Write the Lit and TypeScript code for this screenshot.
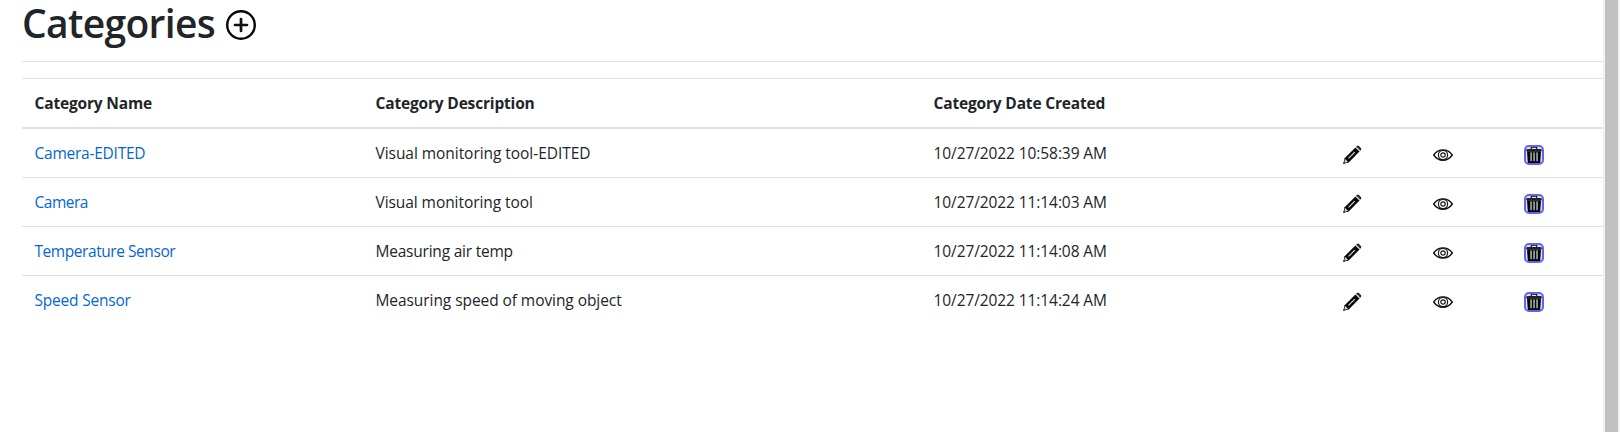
import { LitElement, html, css, svg } from "lit";
import { customElement } from "lit/decorators.js";

interface Category {
  name: string;
  description: string;
  created: string;
  nameTracking: number;
  descriptionTracking: number;
}

const categories: Category[] = [
  { name: "Camera-EDITED", description: "Visual monitoring tool-EDITED", created: "10/27/2022 10:58:39 AM", nameTracking: -0.24, descriptionTracking: -0.05 },
  { name: "Camera", description: "Visual monitoring tool", created: "10/27/2022 11:14:03 AM", nameTracking: -0.48, descriptionTracking: -0.07 },
  { name: "Temperature Sensor", description: "Measuring air temp", created: "10/27/2022 11:14:08 AM", nameTracking: -0.44, descriptionTracking: -0.22 },
  { name: "Speed Sensor", description: "Measuring speed of moving object", created: "10/27/2022 11:14:24 AM", nameTracking: -0.21, descriptionTracking: -0.07 },
];

const plusIcon = html`<svg class="plus" viewBox="0 0 30 30" width="30" height="30">
  <circle cx="15" cy="15" r="13.8" fill="none" stroke="#050505" stroke-width="2.4" />
  <path d="M15 9v12M9 15h12" stroke="#111" stroke-width="2.7" stroke-linecap="round" />
</svg>`;

const pencilIcon = html`<svg viewBox="0 0 20 20" width="20" height="20">
  <path d="M1.3 18.8L2.6 13.3L13.4 2.5L17.5 6.6L6.7 17.4Z" fill="#080808" />
  <path d="M2.2 17.9L3.2 14.1L5.9 16.8Z" fill="#d5d5d5" />
  <path d="M1.2 18.9L1.9 16.8L3.2 18.2Z" fill="#222" />
  <path d="M6.5 13.4L12.8 7.1" stroke="#ddd" stroke-width="1.1" />
  <path d="M14.1 1.8L15 1C15.7.5 16.3.5 16.9 1.1L18.8 3C19.4 3.6 19.4 4.3 18.9 5L18.1 5.8Z" fill="#181818" />
  <path d="M13.6 2.2L17.7 6.4" stroke="#aaa" stroke-width=".7" />
  <path d="M15.7 2.4L17.6 4.2" stroke="#888" stroke-width="1" />
</svg>`;

const eyeIcon = html`<svg viewBox="0 0 20 20" width="20" height="20">
  <path d="M.7 10C5.5 3.1 14.5 3.1 19.3 10C14.5 16.9 5.5 16.9.7 10Z" fill="none" stroke="#111" stroke-width="1.4" />
  <circle cx="10" cy="10" r="4.6" fill="none" stroke="#181818" stroke-width="1.2" />
  <circle cx="10" cy="10" r="2.2" fill="none" stroke="#181818" stroke-width="1.2" />
</svg>`;

const trashIcon = html`<svg viewBox="0 0 16 16" width="16" height="16">
  <path d="M5.2 2V.9Q5.2.3 5.9.3H10.1Q10.8.3 10.8.9V2" fill="none" stroke="#080808" stroke-width="1.1" />
  <path d="M0 4.2L.7 1.9H15.3L16 4.2Z" fill="#222" />
  <path d="M1 4.2H15L14.2 16H1.8Z" fill="#050505" />
  ${[4.4, 7.4, 10.4].map((x) => svg`<rect x=${x} y="5.4" width="1.3" height="8.8" fill="#c5d3d8" />`)}
</svg>`;

@customElement("app-root")
export class AppRoot extends LitElement {
  static styles = css`
    :host {
      display: flex;
      height: 432px;
      background: #fff;
      color: #212529;
      font: 15.5px/24px "Open Sans", "Noto Sans", sans-serif;
    }
    .page {
      flex: 1;
      padding-left: 22px;
    }
    .title {
      display: flex;
      height: 61px;
    }
    h1 {
      margin: 0;
      width: 204px;
      font-size: 39px;
      font-weight: 550;
      line-height: 46px;
      letter-spacing: -0.68px;
      white-space: nowrap;
    }
    .plus {
      margin-top: 10px;
    }
    .rule {
      height: 1px;
      margin-bottom: 16px;
      background: #e3e4e5;
    }
    .row {
      display: grid;
      grid-template-columns: 341px 558px 410px 91px 91px 1fr;
      height: 48px;
      border-top: 1px solid #dee2e6;
    }
    .head {
      font-weight: 700;
      border-bottom: 2px solid #dee2e6;
    }
    .head + .row {
      border-top: 0;
    }
    .cell {
      padding: 12px 0 0 12.5px;
      white-space: nowrap;
    }
    .head .cell {
      letter-spacing: -0.17px;
    }
    .date {
      letter-spacing: -0.09px;
    }
    .link {
      color: #0366d6;
    }
    .icon {
      padding: 16px 0 0 11px;
    }
    svg {
      display: block;
    }
    .delete {
      width: 16px;
      height: 16px;
      border: 2px solid #6262f8;
      border-radius: 5px;
      background: #dce6ee;
    }
    .scrollbar {
      width: 17px;
      box-sizing: border-box;
      padding: 0 2px;
      background: #f1f1f1;
    }
    .thumb {
      height: 100%;
      background: #c1c1c1;
    }
  `;

  render() {
    return html`
      <main class="page">
        <div class="title"><h1>Categories</h1>${plusIcon}</div>
        <div class="rule"></div>
        <div class="row head">
          <div class="cell"><span>Category Name</span></div>
          <div class="cell"><span>Category Description</span></div>
          <div class="cell"><span>Category Date Created</span></div>
        </div>
        ${categories.map(
          (c) => html`<div class="row">
            <div class="cell"><span class="link" style="letter-spacing:${c.nameTracking}px">${c.name}</span></div>
            <div class="cell"><span style="letter-spacing:${c.descriptionTracking}px">${c.description}</span></div>
            <div class="cell date"><span>${c.created}</span></div>
            <div class="icon">${pencilIcon}</div>
            <div class="icon">${eyeIcon}</div>
            <div class="icon"><div class="delete">${trashIcon}</div></div>
          </div>`,
        )}
      </main>
      <div class="scrollbar"><div class="thumb"></div></div>
    `;
  }
}
